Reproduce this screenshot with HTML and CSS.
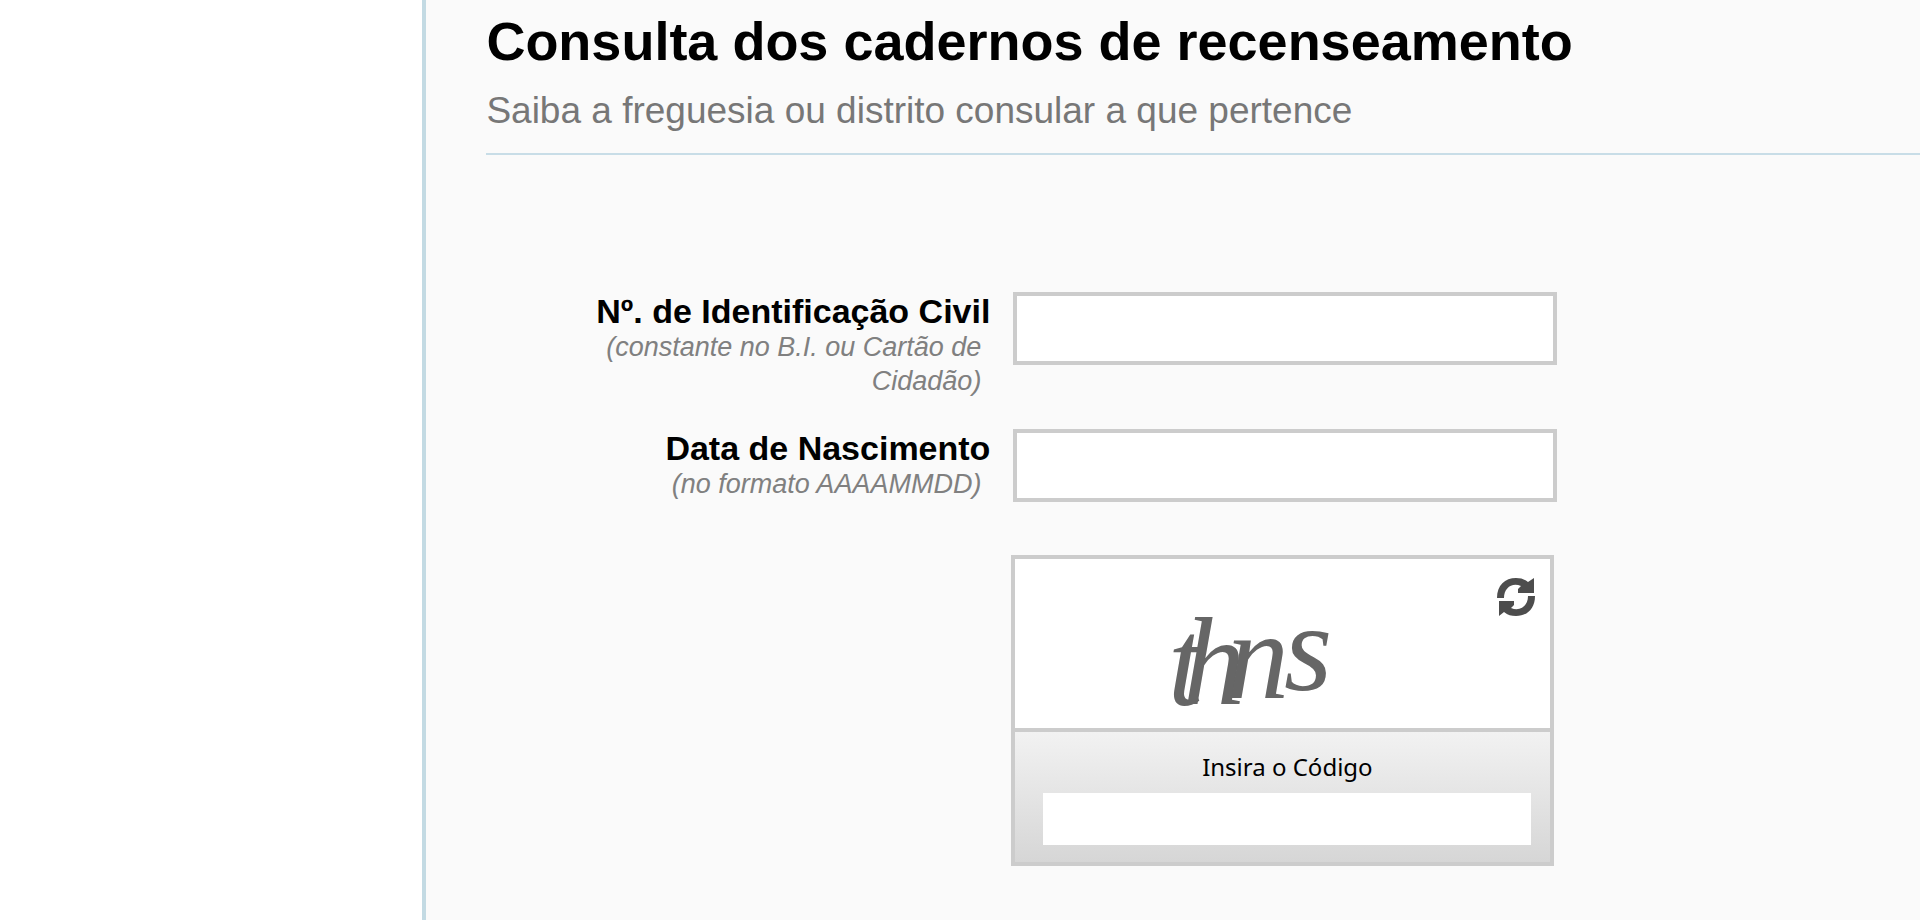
FILE: index.html
```html
<!doctype html>
<html lang="pt">
<head>
    <meta charset="UTF-8">
    <title>Consulta dos cadernos de recenseamento</title>
    <link rel="stylesheet" href="styles.css">
</head>

<body>

    <div class="page">
        <div class="side"></div>

        <div class="content">
            <div class="header">
                <h1>Consulta dos cadernos de recenseamento</h1>
                <h2>Saiba a freguesia ou distrito consular a que pertence</h2>
            </div>

            <form class="form">
                <div class="row">
                    <label class="field_label" for="civil_id">
                        N&ordm;. de Identifica&ccedil;&atilde;o Civil
                        <span class="hint">(constante no B.I. ou Cart&atilde;o de Cidad&atilde;o)</span>
                    </label>
                    <input class="field" type="text" id="civil_id">
                </div>

                <div class="row">
                    <label class="field_label" for="birth_date">
                        Data de Nascimento
                        <span class="hint">(no formato AAAAMMDD)</span>
                    </label>
                    <input class="field" type="text" id="birth_date">
                </div>

                <div class="captcha">
                    <div class="captcha_image">
                        <svg class="captcha_text" viewBox="0 0 535 169">
                            <text transform="translate(153 146)">t</text>
                            <text transform="translate(168 145)">h</text>
                            <text transform="translate(212 139)">n</text>
                            <text transform="translate(269 131)">s</text>
                        </svg>
                        <button class="refresh" type="button" aria-label="Atualizar">
                            <svg width="38" height="40" viewBox="0 0 38 40">
                                <path d="M0 21C0 8 8 1 19 1c5 0 8 1 12 4l6-4v15H21v-4l3-3c-9-4-17 2-17 12z"/>
                                <path d="M38 19c0 13-8 20-19 20-5 0-8-1-12-4l-5 4V24h15v4l-3 3c9 4 17-2 17-12z"/>
                            </svg>
                        </button>
                    </div>
                    <div class="captcha_code">
                        <label for="code">Insira o C&oacute;digo</label>
                        <input type="text" id="code">
                    </div>
                </div>
            </form>
        </div>
    </div>

</body>

</html>
```
FILE: styles.css
```css
* {
    box-sizing: border-box;
}
body {
    margin: 0;
    background: #FFFFFF;
    font-family: "Liberation Sans", Arial, Helvetica, sans-serif;
    color: #000000;
}
.page {
    display: flex;
    min-height: 100vh;
}
.side {
    width: 22%;
}
.content {
    flex: 1;
    padding-left: 60px;
    background: #FAFAFA;
    border-left: 4px solid #C3DAE3;
}
.header {
    padding: 9px 0 20px;
    border-bottom: 2px solid #C8DDE7;
}
h1 {
    margin: 0;
    font-size: 54px;
    line-height: 64px;
}
h2 {
    margin: 16px 0 0;
    font-size: 37px;
    line-height: 44px;
    font-weight: normal;
    color: #777777;
}
.form {
    padding: 137px 0 0 104px;
}
.row {
    display: flex;
    align-items: flex-start;
    gap: 23px;
    min-height: 73px;
    margin-bottom: 31px;
}
.field_label {
    width: 400px;
    font-size: 34px;
    line-height: 38px;
    font-weight: bold;
    text-align: right;
}
.hint {
    display: block;
    padding-right: 9px;
    font-size: 27px;
    line-height: 34px;
    font-weight: normal;
    font-style: italic;
    color: #808080;
}
.field {
    width: 544px;
    height: 73px;
    padding: 0 12px;
    border: 4px solid #CCCCCC;
    background: #FFFFFF;
    font-size: 34px;
}

/* captcha box */
.captcha {
    width: 543px;
    margin: 53px 0 0 421px;
    border: 4px solid #CCCCCC;
}
.captcha_image {
    position: relative;
    height: 169px;
    background: #FFFFFF;
}
.captcha_text {
    display: block;
    width: 100%;
    height: 100%;
    overflow: visible;
    font-family: "Liberation Serif", "Times New Roman", serif;
    font-size: 124px;
    font-style: italic;
    fill: #666666;
}
.refresh {
    position: absolute;
    top: 18px;
    right: 15px;
    padding: 0;
    border: 0;
    background: none;
    cursor: pointer;
}
.refresh svg {
    display: block;
    fill: #4D4D4D;
}
.captcha_code {
    padding: 19px 19px 17px 28px;
    border-top: 4px solid #CCCCCC;
    background: linear-gradient(#F2F2F2, #D6D6D6);
    text-align: center;
}
.captcha_code label {
    display: block;
    margin-bottom: 10px;
    font-family: "Noto Sans", Tahoma, sans-serif;
    font-size: 24px;
    line-height: 32px;
}
.captcha_code input {
    display: block;
    width: 100%;
    height: 52px;
    padding: 0 8px;
    border: 0;
    background: #FFFFFF;
    font-size: 27px;
}
```
